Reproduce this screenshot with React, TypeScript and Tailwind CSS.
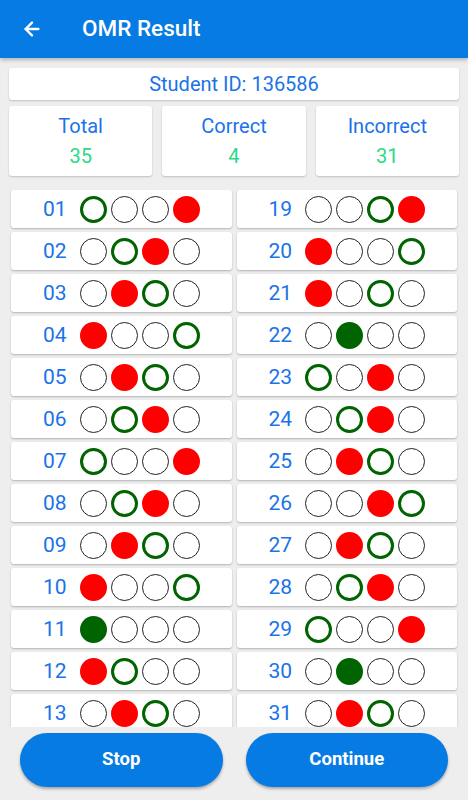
import { ArrowLeft } from 'lucide-react';

type Mark = 'e' | 'g' | 'G' | 'R';

const left: [string, Mark[]][] = [
  ['01', ['g', 'e', 'e', 'R']],
  ['02', ['e', 'g', 'R', 'e']],
  ['03', ['e', 'R', 'g', 'e']],
  ['04', ['R', 'e', 'e', 'g']],
  ['05', ['e', 'R', 'g', 'e']],
  ['06', ['e', 'g', 'R', 'e']],
  ['07', ['g', 'e', 'e', 'R']],
  ['08', ['e', 'g', 'R', 'e']],
  ['09', ['e', 'R', 'g', 'e']],
  ['10', ['R', 'e', 'e', 'g']],
  ['11', ['G', 'e', 'e', 'e']],
  ['12', ['R', 'g', 'e', 'e']],
  ['13', ['e', 'R', 'g', 'e']],
  ['14', ['e', 'e', 'R', 'g']],
  ['15', ['G', 'e', 'e', 'e']],
  ['16', ['e', 'g', 'R', 'e']],
  ['17', ['R', 'e', 'g', 'e']],
  ['18', ['e', 'e', 'g', 'R']],
];

const right: [string, Mark[]][] = [
  ['19', ['e', 'e', 'g', 'R']],
  ['20', ['R', 'e', 'e', 'g']],
  ['21', ['R', 'e', 'g', 'e']],
  ['22', ['e', 'G', 'e', 'e']],
  ['23', ['g', 'e', 'R', 'e']],
  ['24', ['e', 'g', 'R', 'e']],
  ['25', ['e', 'R', 'g', 'e']],
  ['26', ['e', 'e', 'R', 'g']],
  ['27', ['e', 'R', 'g', 'e']],
  ['28', ['e', 'g', 'R', 'e']],
  ['29', ['g', 'e', 'e', 'R']],
  ['30', ['e', 'G', 'e', 'e']],
  ['31', ['e', 'R', 'g', 'e']],
  ['32', ['R', 'e', 'e', 'g']],
  ['33', ['e', 'g', 'e', 'R']],
  ['34', ['g', 'R', 'e', 'e']],
  ['35', ['e', 'e', 'R', 'g']],
];

const Bubble = ({ mark }: { mark: Mark }) => {
  if (mark === 'R') return <span className="w-[27px] h-[27px] rounded-full bg-[#ff0000]" />;
  if (mark === 'G') return <span className="w-[27px] h-[27px] rounded-full bg-[#006400]" />;
  if (mark === 'g')
    return <span className="w-[27px] h-[27px] rounded-full border-[3px] border-[#006400] bg-white" />;
  return <span className="w-[27px] h-[27px] rounded-full border border-[#222] bg-white" />;
};

const Row = ({ num, marks }: { num: string; marks: Mark[] }) => (
  <div className="h-[38px] bg-white rounded-[3px] shadow-[0_1px_2px_rgba(0,0,0,0.25)] flex items-center justify-center gap-[13px]">
    <span className="text-[21px] text-[#1a73e8] leading-none">{num}</span>
    <div className="flex gap-[4px]">
      {marks.map((m, i) => (
        <Bubble key={i} mark={m} />
      ))}
    </div>
  </div>
);

const Stat = ({ label, value }: { label: string; value: string }) => (
  <div className="flex-1 h-[70px] bg-white rounded-[3px] shadow-[0_1px_2px_rgba(0,0,0,0.2)] flex flex-col items-center justify-center gap-[10px]">
    <span className="text-[20px] leading-none text-[#1a73e8]">{label}</span>
    <span className="text-[20px] leading-none text-[#2bd98a]">{value}</span>
  </div>
);

export default function App() {
  return (
    <div
      className="w-[468px] h-[800px] bg-[#eeeeee] flex flex-col overflow-hidden"
      style={{ fontFamily: 'Roboto, "Noto Sans", sans-serif' }}
    >
      {/* Header */}
      <header className="h-[58px] shrink-0 bg-[#077be4] flex items-center shadow-[0_2px_4px_rgba(0,0,0,0.25)] z-10">
        <ArrowLeft className="w-[22px] h-[22px] text-white ml-[21px]" strokeWidth={2.5} />
        <h1 className="ml-[39px] text-white text-[22.5px] font-medium">OMR Result</h1>
      </header>

      <div className="px-[9px] pt-[10px] shrink-0">
        <div className="h-[32px] bg-white rounded-[3px] shadow-[0_1px_2px_rgba(0,0,0,0.2)] flex items-center justify-center text-[20px] text-[#1a73e8]">
          Student ID: 136586
        </div>
        <div className="flex gap-[10px] mt-[6px]">
          <Stat label="Total" value="35" />
          <Stat label="Correct" value="4" />
          <Stat label="Incorrect" value="31" />
        </div>
      </div>

      {/* Answers */}
      <div className="flex-1 mt-[14px] px-[11px] overflow-hidden">
        <div className="grid grid-cols-2 gap-x-[5px] pb-[4px]">
          <div className="flex flex-col gap-[4px]">
            {left.map(([n, m]) => (
              <Row key={n} num={n} marks={m} />
            ))}
          </div>
          <div className="flex flex-col gap-[4px]">
            {right.map(([n, m]) => (
              <Row key={n} num={n} marks={m} />
            ))}
          </div>
        </div>
      </div>

      {/* Buttons */}
      <div className="h-[73px] shrink-0 px-[20px] pt-[6px] flex gap-[23px]">
        <button className="flex-1 h-[54px] rounded-full bg-[#077be4] text-white text-[18.5px] font-bold shadow-[0_2px_3px_rgba(0,0,0,0.3)]">
          Stop
        </button>
        <button className="flex-1 h-[54px] rounded-full bg-[#077be4] text-white text-[18.5px] font-bold shadow-[0_2px_3px_rgba(0,0,0,0.3)]">
          Continue
        </button>
      </div>
    </div>
  );
}
